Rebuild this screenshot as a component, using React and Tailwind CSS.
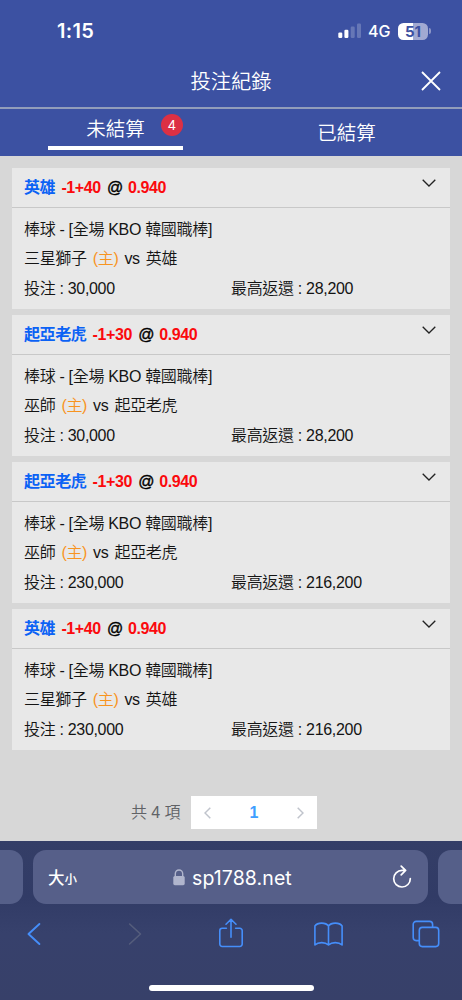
import React from "react";

const bets = [
  { pick: "英雄", line: "-1+40", odds: "0.940", home: "三星獅子", away: "英雄", stake: "30,000", payout: "28,200" },
  { pick: "起亞老虎", line: "-1+30", odds: "0.940", home: "巫師", away: "起亞老虎", stake: "30,000", payout: "28,200" },
  { pick: "起亞老虎", line: "-1+30", odds: "0.940", home: "巫師", away: "起亞老虎", stake: "230,000", payout: "216,200" },
  { pick: "英雄", line: "-1+40", odds: "0.940", home: "三星獅子", away: "英雄", stake: "230,000", payout: "216,200" },
];

function StatusBar() {
  return (
    <div className="flex h-[55px] items-center justify-between pt-[7px] pr-[31px] pl-[57px] font-['Inter','Noto_Sans_CJK_TC',sans-serif] text-white">
      <span className="text-[20px] leading-none font-semibold tracking-[0.3px]">1:15</span>
      <div className="flex items-center">
        <svg className="h-[16px] w-[24px]" viewBox="0 0 24 16" fill="#fff">
          <rect x="0.3" y="9.5" width="4" height="5.5" rx="1.2" />
          <rect x="6.4" y="6.8" width="4" height="8.2" rx="1.2" />
          <rect x="12.7" y="3.6" width="4" height="11.4" rx="1.2" opacity="0.22" />
          <rect x="19" y="0.4" width="4" height="14.6" rx="1.2" opacity="0.22" />
        </svg>
        <span className="ml-[6px] w-[24px] text-[16px] leading-none font-medium tracking-[-0.1px]">4G</span>
        <div className="ml-[6px] flex h-[17px] w-[30px] items-center justify-center rounded-[5.5px] bg-[linear-gradient(90deg,#fff_50%,#a1a9d2_50%)] text-[15px] leading-none font-bold text-[#3c51a2]">
          51
        </div>
        <span className="ml-px h-[6px] w-[2px] rounded-r-full bg-[#8c96c7]" />
      </div>
    </div>
  );
}

function BetCard({ bet }) {
  return (
    <article className="h-[141px] bg-[#e8e8e8] text-[16px] tracking-[-0.32px] text-[#141414]">
      <div className="flex h-[40px] items-center gap-[6.2px] border-b border-[#c8c8c8] pr-[14px] pt-px pl-3 leading-none font-bold tracking-[-0.4px] text-[#fb0a0d]">
        <span className="text-[#0b62f5]">{bet.pick}</span>
        <span>{bet.line}</span>
        <span className="font-normal text-black [-webkit-text-stroke:0.4px_black]">@</span>
        <span className="-ml-px">{bet.odds}</span>
        <svg className="mb-[10px] ml-auto h-[8px] w-[14px]" viewBox="0 0 14 8" fill="none" stroke="#222" strokeWidth="1.3">
          <path d="M0.7 0.7 7 7 13.3 0.7" />
        </svg>
      </div>
      <div className="flex flex-col pt-[7px] pl-3 leading-[29.6px] font-[350]">
        <p className="whitespace-nowrap">棒球 - [全場 KBO 韓國職棒]</p>
        <p className="-mt-px mb-px flex gap-[6px]">
          <span>{bet.home}</span>
          <span className="text-[#f8941f]">(主)</span>
          <span>vs</span>
          <span>{bet.away}</span>
        </p>
        <div className="flex">
          <span className="w-[207px]">投注 : {bet.stake}</span>
          <span>最高返還 : {bet.payout}</span>
        </div>
      </div>
    </article>
  );
}

function Pager() {
  return (
    <div className="mt-[46px] flex h-[33px] items-center pl-[131px] text-[16px] text-[#606266]">
      <span className="w-[60px] font-[350] tracking-[-0.1px]">共 4 項</span>
      <div className="flex h-[33px] w-[126px] items-center justify-between bg-white px-[13px]">
        <svg className="h-[12px] w-[7px]" viewBox="0 0 7 12" fill="none" stroke="#c0c4cc" strokeWidth="1.5">
          <path d="M6.3 0.8 1 6 6.3 11.2" />
        </svg>
        <span className="font-bold text-[#409eff]">1</span>
        <svg className="h-[12px] w-[7px]" viewBox="0 0 7 12" fill="none" stroke="#c0c4cc" strokeWidth="1.5">
          <path d="M0.7 0.8 6 6 0.7 11.2" />
        </svg>
      </div>
    </div>
  );
}

function BrowserBar() {
  return (
    <footer className="h-[159px] overflow-hidden bg-[linear-gradient(180deg,#343e67_0%,#313b66_35%,#37416c_58%,#374069_100%)]">
      <div className="flex gap-[10px] pt-[9px]">
        <div className="h-[54px] w-[23px] shrink-0 rounded-r-[13px] bg-[#555f89]" />
        <div className="flex h-[54px] w-[395px] shrink-0 items-center rounded-[13px] bg-[#565f89] pr-[16px] pl-[15px] text-white">
          <div className="flex w-[125px] items-baseline font-['Noto_Sans_CJK_TC',sans-serif] leading-none font-medium">
            <span className="text-[16.5px]">大</span>
            <span className="text-[12.5px]">小</span>
          </div>
          <svg className="h-[17px] w-[12px]" viewBox="0 0 12 17">
            <path d="M2.3 8V4.7a3.7 3.7 0 0 1 7.4 0V8" fill="none" stroke="#b0b5cd" strokeWidth="1.4" />
            <rect x="0.3" y="7" width="11.4" height="9.2" rx="1.6" fill="#b0b5cd" />
          </svg>
          <span className="ml-[7px] pt-[3px] font-['Inter',sans-serif] text-[19.5px] leading-none tracking-[0.1px]">sp1788.net</span>
          <svg className="mb-px ml-auto h-[23px] w-[20px]" viewBox="0 0 20 23" fill="none" stroke="#fff" strokeWidth="1.7" strokeLinecap="round" strokeLinejoin="round">
            <path d="M18.3 13.6A8.3 8.3 0 1 1 10 5.4H13.2M9.2 1.1 13.6 5.4 9.2 9.8" />
          </svg>
        </div>
        <div className="h-[54px] w-[24px] shrink-0 rounded-l-[13px] bg-[#555f89]" />
      </div>
      <nav className="flex h-[60px] items-center pl-[27px] text-[#458efa]">
        <svg className="h-[24px] w-[14px]" viewBox="0 0 14 24" fill="none" stroke="currentColor" strokeWidth="1.9" strokeLinecap="round" strokeLinejoin="round">
          <path d="M12.4 2 1.5 12l10.9 10" />
        </svg>
        <svg className="ml-[87px] h-[24px] w-[14px]" viewBox="0 0 14 24" fill="none" stroke="#555d7c" strokeWidth="1.6" strokeLinecap="round" strokeLinejoin="round">
          <path d="M1.6 2 12.5 12 1.6 22" />
        </svg>
        <svg className="mb-[2px] ml-[77px] h-[30px] w-[24px]" viewBox="0 0 24 30" fill="none" stroke="currentColor" strokeWidth="1.6" strokeLinecap="round" strokeLinejoin="round">
          <path d="M7.4 10.3H3.2a2.4 2.4 0 0 0-2.4 2.4v13.4a2.4 2.4 0 0 0 2.4 2.4h17.6a2.4 2.4 0 0 0 2.4-2.4V12.7a2.4 2.4 0 0 0-2.4-2.4h-4.2M12 19.2V1.3M7 6.2 12 1.3 17 6.2" />
        </svg>
        <svg className="ml-[71px] h-[25px] w-[29px]" viewBox="0 0 29 25" fill="none" stroke="currentColor" strokeWidth="1.6" strokeLinejoin="round">
          <path d="M14.5 4C11.8.2 3.5.2.9 4v19c3.4-3.2 10.2-3.2 13.6 0 3.4-3.2 10.2-3.2 13.6 0V4C25.5.2 17.2.2 14.5 4ZM14.5 4v19" />
        </svg>
        <svg className="ml-[69px] h-[28px] w-[28px]" viewBox="0 0 28 28" fill="none" stroke="currentColor" strokeWidth="1.6">
          <rect x="7.3" y="7.4" width="19.4" height="19.2" rx="3" />
          <path d="M7.3 20.6H4.2a3 3 0 0 1-3-3V4.4a3 3 0 0 1 3-3h13.4a3 3 0 0 1 3 3v3" />
        </svg>
      </nav>
      <div className="mx-auto mt-[21px] h-[6px] w-[165px] rounded-full bg-white" />
    </footer>
  );
}

export default function App() {
  return (
    <div className="flex h-[1000px] w-[462px] flex-col overflow-hidden bg-[#d7d7d7] font-['Liberation_Sans','Noto_Sans_CJK_TC',sans-serif]">
      <header className="h-[156px] bg-[#3c51a2] text-white">
        <StatusBar />
        <div className="grid h-[54px] grid-cols-[1fr_auto_1fr] items-center border-b-2 border-[#929dba] pr-[21px] pl-[21px]">
          <span />
          <h1 className="pt-[2px] text-[20.3px] leading-none font-[350]">投注紀錄</h1>
          <svg className="h-[20px] w-[20px] justify-self-end" viewBox="0 0 20 20" fill="none" stroke="#fff" strokeWidth="1.8">
            <path d="m1 1 18 18M19 1 1 19" />
          </svg>
        </div>
        <div className="flex h-[47px] text-[19.5px] leading-none font-[350]">
          <div className="flex w-[231px] justify-center">
            <div className="relative flex h-[41px] w-[135px] justify-center border-b-4 border-white pt-[11px]">
              <span>未結算</span>
              <span className="absolute top-[5px] right-0 flex h-[22px] w-[22px] items-center justify-center rounded-full bg-[#dc3044] text-[14px]">4</span>
            </div>
          </div>
          <div className="flex w-[231px] justify-center pt-[15px]">已結算</div>
        </div>
      </header>
      <main className="h-[685px] px-3 pt-3">
        <div className="flex flex-col gap-[6px]">
          {bets.map((bet, i) => (
            <BetCard key={i} bet={bet} />
          ))}
        </div>
        <div className="-ml-3">
          <Pager />
        </div>
      </main>
      <BrowserBar />
    </div>
  );
}
